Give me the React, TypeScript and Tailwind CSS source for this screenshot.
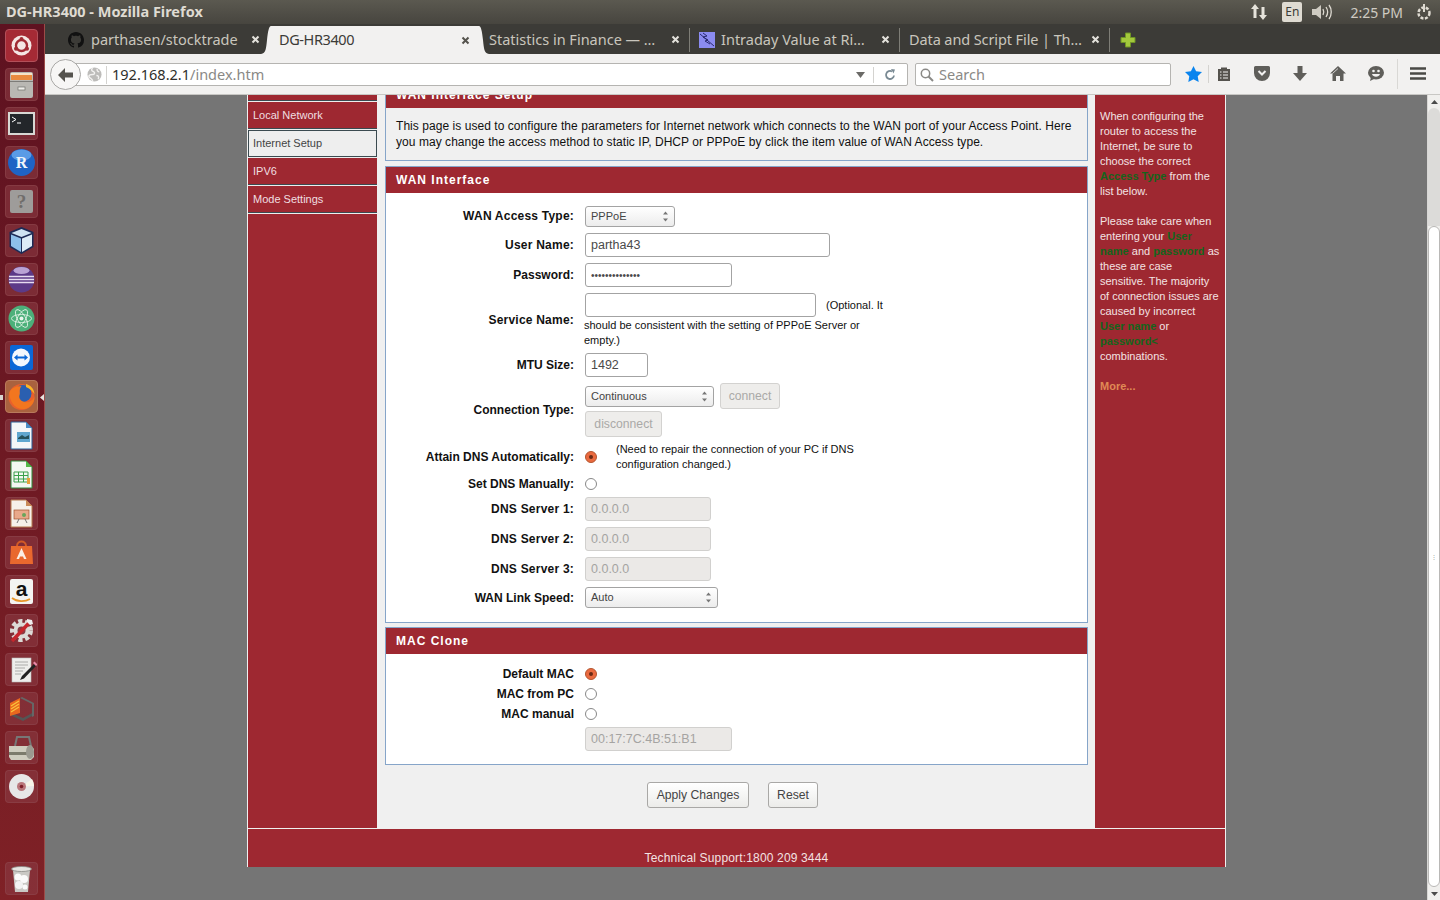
import type { ReactNode } from "react";

const sans = "font-['Liberation_Sans',Arial,sans-serif]";
const ui = "font-['Noto_Sans',sans-serif]";

function Tile({ children, active, dash }: { children: ReactNode; active?: boolean; dash?: boolean }) {
  const bg = active
    ? "bg-[#a9623f] border-[#b97a5c]"
    : dash
      ? "bg-[#a52a35] border-[#b3505a]"
      : "bg-[#8a3a42]/60 border-[#8f4a50]/50";
  return (
    <div className={`w-[33px] h-[33px] rounded-[4px] border shrink-0 flex items-center justify-center ${bg}`}>
      <svg width="31" height="31" viewBox="0 0 31 31">
        {children}
      </svg>
    </div>
  );
}

function Launcher() {
  return (
    <aside className="relative w-[45px] shrink-0 bg-gradient-to-b from-[#5e1220] to-[#7f2126] border-r border-[#9c4b48] flex flex-col items-center pt-[5px] pr-[6px] pl-[5px] gap-[6px]">
      <div className="absolute left-0 top-[371px] w-[3px] h-[5px] bg-[#d8d4d0]" />
      <svg width="4" height="7" viewBox="0 0 4 7" className="absolute left-[40px] top-[370px]"><path d="M4 0L0 3.500 4 7z" fill="#e8e4e0" /></svg>
      <Tile dash>
        <circle cx="15.5" cy="15.5" r="10" fill="#f4e6e4" />
        <circle cx="15.5" cy="15.5" r="5.5" fill="none" stroke="#a12b34" strokeWidth="2.4" />
        <circle cx="15.5" cy="9" r="2" fill="#a12b34" />
        <circle cx="10" cy="18.8" r="2" fill="#a12b34" />
        <circle cx="21" cy="18.8" r="2" fill="#a12b34" />
      </Tile>
      <Tile>
        <rect x="4" y="3" width="23" height="26" rx="2" fill="#b9b8b3" />
        <rect x="5" y="4" width="21" height="7" fill="#e98a3f" />
        <rect x="5" y="4" width="21" height="2" fill="#f6e2c8" />
        <rect x="4" y="12" width="23" height="1" fill="#7d7c78" />
        <rect x="12" y="18" width="7" height="3" fill="#eeeeea" stroke="#6f6f6b" strokeWidth="0.7" />
      </Tile>
      <Tile>
        <rect x="2" y="4" width="27" height="23" fill="#d8d8d4" />
        <rect x="4" y="6" width="23" height="19" fill="#23262a" />
        <path d="M6 9l4 2.500-4 2.500" fill="none" stroke="#fff" strokeWidth="1" />
        <path d="M11 15h4" stroke="#fff" strokeWidth="1" />
      </Tile>
      <Tile>
        <circle cx="15.5" cy="15.5" r="13.500" fill="#1f63c4" />
        <ellipse cx="15.5" cy="8" rx="10" ry="5.500" fill="#5a9be6" />
        <text x="15.5" y="21" textAnchor="middle" fontFamily="Liberation Serif, serif" fontWeight="700" fontSize="16" fill="#f2f5fa">R</text>
      </Tile>
      <Tile>
        <rect x="4" y="4" width="23" height="23" rx="2" fill="#9e9c9a" />
        <text x="15.5" y="22" textAnchor="middle" fontFamily="Liberation Serif, serif" fontWeight="700" fontSize="19" fill="#6f6d6b">?</text>
      </Tile>
      <Tile>
        <path d="M15.5 2l12 5v15l-12 7-12-7V7z" fill="#1d2a55" />
        <path d="M15.5 4l10 4-10 4-10-4z" fill="#cfe3f2" />
        <path d="M5 9.500l10 4V27l-10-6z" fill="#8ec0ea" />
        <path d="M16 13.500l10-4V21l-10 6z" fill="#dcebf6" />
      </Tile>
      <Tile>
        <circle cx="15.5" cy="15.5" r="13" fill="#5c3a88" />
        <path d="M3 12.5h25M3 15.5h25M3 18.5h25" stroke="#e6dcf0" strokeWidth="1.4" />
        <ellipse cx="15.5" cy="6.5" rx="8" ry="3.5" fill="#b9a2d4" />
      </Tile>
      <Tile>
        <circle cx="15.5" cy="15.5" r="13" fill="#4cb07a" />
        <circle cx="15.5" cy="15.5" r="2" fill="#e8f5ec" />
        <ellipse cx="15.5" cy="15.5" rx="10" ry="4" fill="none" stroke="#e8f5ec" strokeWidth="0.8" />
        <ellipse cx="15.5" cy="15.5" rx="10" ry="4" fill="none" stroke="#e8f5ec" strokeWidth="0.8" transform="rotate(60 15.5 15.5)" />
        <ellipse cx="15.5" cy="15.5" rx="10" ry="4" fill="none" stroke="#e8f5ec" strokeWidth="0.8" transform="rotate(120 15.5 15.5)" />
      </Tile>
      <Tile>
        <rect x="4" y="3" width="23" height="25" rx="2" fill="#0b67d6" />
        <circle cx="15" cy="15.5" r="9" fill="#f4f8fd" />
        <path d="M8 15.5l3.5-3v2h7v-2l3.5 3-3.5 3v-2h-7v2z" fill="#0b67d6" />
      </Tile>
      <Tile active>
        <circle cx="15.5" cy="16" r="13" fill="#e8602c" />
        <circle cx="17" cy="12.500" r="8.500" fill="#2a5fb0" />
        <path d="M3.500 12c0 9 6 17 15 16 6-1 10-6 10-12-2 4-6 6-10 5-4-1-6-4-5-7 1-2-1-5 2-9C9 5 4 8 3.500 12z" fill="#f2761f" />
        <path d="M20 3c4 1 8 4 8.500 10-2-3-4-5-8.500-7z" fill="#fbb627" />
      </Tile>
      <Tile>
        <path d="M5 2h15l6 6v21H5z" fill="#f4f6f8" stroke="#2a5f96" strokeWidth="1" />
        <path d="M20 2l6 6h-6z" fill="#4b8cc4" />
        <rect x="11" y="12" width="13" height="10" fill="#5fa6cf" />
        <path d="M12 18l4-3 3 2 4-2v4H12z" fill="#24515c" />
      </Tile>
      <Tile>
        <path d="M5 2h15l6 6v21H5z" fill="#f4f8f2" stroke="#2e8b3a" strokeWidth="1" />
        <path d="M20 2l6 6h-6z" fill="#54b948" />
        <path d="M8 13h14v10H8zM8 16.500h14M8 20h14M12.500 13v10M17.500 13v10" fill="none" stroke="#3aa04a" strokeWidth="1" />
        <rect x="21" y="19" width="3" height="6" fill="#e8a23a" />
      </Tile>
      <Tile>
        <path d="M5 2h15l6 6v21H5z" fill="#f6f1ea" stroke="#b47b4f" strokeWidth="1" />
        <path d="M20 2l6 6h-6z" fill="#c98a58" />
        <rect x="8" y="12" width="15" height="9" fill="#e9a98a" stroke="#a0522d" strokeWidth="0.7" />
        <circle cx="18" cy="17" r="2" fill="#6aa55a" />
        <path d="M13 21l-2 4M19 21l2 4" stroke="#555" strokeWidth="0.8" />
      </Tile>
      <Tile>
        <path d="M5 9h21l1 18H4z" fill="#e9682e" />
        <path d="M11 9c0-6 9-6 9 0" fill="none" stroke="#d25a26" strokeWidth="2" />
        <path d="M15.500 11l5 11h-2.500l-1-2.500h-3l-1 2.500h-2.500z" fill="#fbeee4" />
      </Tile>
      <Tile>
        <rect x="4" y="3" width="23" height="25" rx="2" fill="#f4f4f2" />
        <text x="15.500" y="20" textAnchor="middle" fontFamily="Liberation Sans, sans-serif" fontWeight="700" fontSize="21" fill="#111">a</text>
        <path d="M6 22c5 4 13 4 18 1" fill="none" stroke="#e8962a" strokeWidth="1.800" />
      </Tile>
      <Tile>
        <circle cx="15.500" cy="15.500" r="9" fill="none" stroke="#dcdad6" strokeWidth="5" strokeDasharray="4 2.500" />
        <circle cx="15.500" cy="15.500" r="8" fill="#dcdad6" />
        <circle cx="15.500" cy="15.500" r="4" fill="#8a3a42" />
        <path d="M6 26L23 8" stroke="#c5262c" strokeWidth="3.500" />
        <path d="M21 4l5 1 1 4-3 1-3-3z" fill="#eeeeee" />
      </Tile>
      <Tile>
        <rect x="6" y="4" width="19" height="24" fill="#eeeeec" stroke="#bbb" strokeWidth="0.6" />
        <path d="M9 8h13M9 11h13M9 14h10M9 17h8M9 20h6" stroke="#9a9a9a" strokeWidth="0.8" />
        <path d="M28 10l-12 12-2 4 4-1.500L30 12z" fill="#222" />
        <path d="M27 9l3 3 1.500-1.500-3-3z" fill="#e88aa8" />
      </Tile>
      <Tile>
        <path d="M4 22L17 28l11-6v-3L17 25 4 19z" fill="#555" />
        <path d="M16 4l12 6v13l-2 1V11L14 5z" fill="#666" />
        <path d="M4 10l10-5v15l-10 3z" fill="#e9671e" />
        <path d="M5 13l8-5M5 16l8-5M5 19l8-5" stroke="#f9c23c" strokeWidth="1.400" />
      </Tile>
      <Tile>
        <path d="M9 14l2-9h12l2 9" fill="none" stroke="#777" strokeWidth="2" />
        <path d="M3 14h22l3 3v8l-3 3H5l-2-3z" fill="#cfcdbf" />
        <rect x="3" y="20" width="22" height="3" fill="#7c7b6c" />
        <ellipse cx="24" cy="20" rx="4" ry="7" fill="#9b9a90" />
      </Tile>
      <Tile>
        <circle cx="15.500" cy="15.500" r="12.500" fill="#e7e7e7" />
        <path d="M15.500 15.500L26 8a12.500 12.500 0 0 1 2 7z" fill="#f6f4e8" />
        <circle cx="15.500" cy="15.500" r="4.500" fill="#b9777b" />
        <circle cx="15.500" cy="15.500" r="1.800" fill="#7e1f28" />
      </Tile>
      <div className="mt-auto mb-[5px]">
        <Tile>
          <path d="M7 7l2 22h13l2-22z" fill="#c9c8c4" />
          <ellipse cx="15.500" cy="6" rx="10" ry="2.500" fill="#e6e5e1" stroke="#8a8a86" strokeWidth="0.8" />
          <circle cx="12" cy="14" r="3.500" fill="#fafafa" />
          <circle cx="18" cy="16" r="4" fill="#fafafa" />
          <circle cx="13" cy="22" r="4" fill="#f2f2f2" />
          <circle cx="19" cy="24" r="2.500" fill="#fafafa" />
        </Tile>
      </div>
    </aside>
  );
}

function CloseX() {
  return (
    <svg width="9" height="9" viewBox="0 0 9 9" className="shrink-0">
      <path d="M1.500 1.500l6 6M7.500 1.500l-6 6" stroke="currentColor" strokeWidth="2" />
    </svg>
  );
}

function Sep() {
  return <div className="w-px h-[24px] bg-[#7e7d76] shrink-0" />;
}

function TabBar() {
  return (
    <div className={`h-[30px] bg-[#3c3b37] flex items-start pt-[2px] text-[#c9c6bd] text-[14.500px] ${ui}`}>
      <div className="w-[217px] h-[27px] flex items-center shrink-0 pl-[23px]">
        <svg width="16" height="16" viewBox="0 0 16 16" fill="#111" className="shrink-0">
          <path d="M8 0C3.580 0 0 3.580 0 8c0 3.540 2.290 6.530 5.470 7.590.4.070.55-.17.55-.38 0-.19-.01-.82-.01-1.490-2.010.37-2.530-.49-2.690-.94-.09-.23-.48-.94-.82-1.130-.28-.15-.68-.52-.01-.53.63-.01 1.080.58 1.230.82.720 1.210 1.870.870 2.330.660.070-.520.280-.870.510-1.070-1.780-.2-3.640-.890-3.640-3.950 0-.870.310-1.590.820-2.150-.080-.2-.360-1.020.080-2.120 0 0 .670-.210 2.200.820.640-.180 1.320-.270 2-.270s1.360.090 2 .270c1.530-1.040 2.200-.820 2.200-.820.440 1.100.160 1.920.080 2.120.510.560.820 1.270.820 2.150 0 3.070-1.870 3.750-3.650 3.950.290.250.540.730.540 1.480 0 1.070-.010 1.930-.010 2.200 0 .210.150.460.550.380A8.010 8.010 0 0 0 16 8c0-4.420-3.580-8-8-8z" />
        </svg>
        <span className="ml-[7px] w-[148px] truncate whitespace-nowrap">parthasen/stocktrade</span>
        <span className="ml-[12px] text-[#e4e2dc]"><CloseX /></span>
      </div>
      <div className="flex h-[28px] shrink-0 -ml-[1px]">
        <svg width="10" height="28" viewBox="0 0 10 28" className="shrink-0"><path d="M0 28c5-1 5-5 6-14C7 5 8 0 10 0v28z" fill="#f2f1f0" /></svg>
        <div className="w-[208px] bg-[#f2f1f0] text-[#3c3b37] flex items-center pl-[8px]">
          <span className="w-[182px] whitespace-nowrap tracking-[-0.4px]">DG-HR3400</span>
          <span className="text-[#55534d]"><CloseX /></span>
        </div>
        <svg width="10" height="28" viewBox="0 0 10 28" className="shrink-0"><path d="M10 28c-5-1-5-5-6-14C3 5 2 0 0 0v28z" fill="#f2f1f0" /></svg>
      </div>
      <div className="h-[27px] flex items-center shrink-0">
        <span className="w-[172px] ml-[-3px] pl-[3px] whitespace-nowrap overflow-hidden">Statistics in Finance — …</span>
        <span className="ml-[13px] text-[#e4e2dc]"><CloseX /></span>
        <span className="ml-[9px]"><Sep /></span>
        <svg width="16" height="16" viewBox="0 0 16 16" className="ml-[9px] shrink-0">
          <rect width="16" height="16" fill="#8b8bf0" />
          <path d="M1 2l14 12M4 1l4 3-4 1 5 3-3 1 5 3" fill="none" stroke="#2a2a70" strokeWidth="1" />
        </svg>
        <span className="ml-[6px] w-[146px] whitespace-nowrap overflow-hidden">Intraday Value at Ri…</span>
        <span className="ml-[14px] text-[#e4e2dc]"><CloseX /></span>
        <span className="ml-[9px]"><Sep /></span>
        <span className="ml-[9px] w-[174px] whitespace-nowrap tracking-[-0.1px]">Data and Script File | Th…</span>
        <span className="ml-[8px] text-[#e4e2dc]"><CloseX /></span>
        <span className="ml-[9px]"><Sep /></span>
        <svg width="16" height="16" viewBox="0 0 16 16" className="ml-[10px] shrink-0">
          <path d="M5.500 1h5v4.500H15v5h-4.500V15h-5v-4.500H1v-5h4.500z" fill="#a3c83c" stroke="#6f9425" strokeWidth="1" />
        </svg>
      </div>
    </div>
  );
}

function NavBar() {
  return (
    <div className={`h-[41px] bg-[#f2f1f0] border-b border-[#c8c7c4] flex items-center pl-[5px] pt-[1px] ${ui}`}>
      <button className="relative z-10 w-[31px] h-[31px] rounded-full border border-[#a9a8a6] bg-[#f7f6f5] flex items-center justify-center shrink-0">
        <svg width="16" height="14" viewBox="0 0 16 14"><path d="M7 0L0 7l7 7V9.500h8v-5H7z" fill="#55534e" /></svg>
      </button>
      <div className="-ml-[6px] w-[833px] h-[23px] bg-white border border-[#b5b4b1] rounded-r-[2px] flex items-center pl-[11px] pr-[11px] shrink-0">
        <svg width="15" height="15" viewBox="0 0 16 16" className="shrink-0">
          <circle cx="8" cy="8" r="7.500" fill="#bdbcba" />
          <path d="M6 1c-2 2-1 3 1 4s1 3-1 3-4 0-4 2 4 2 4 5M11 2c-1 2 1 3 2 3M10 9c2 0 3 1 2 4" stroke="#f2f1f0" strokeWidth="1.500" fill="none" />
        </svg>
        <div className="w-px h-[18px] bg-[#d4d3d0] ml-[4px] mr-[5px]" />
        <span className="text-[14.500px] text-[#2f2e2b] whitespace-nowrap">192.168.2.1<span className="text-[#8a8986]">/index.htm</span></span>
        <svg width="9" height="6" viewBox="0 0 9 6" className="ml-auto mr-[8px]"><path d="M0 0h9L4.500 6z" fill="#6b6a67" /></svg>
        <div className="w-px h-[16px] bg-[#d4d3d0] mr-[10px]" />
        <svg width="12" height="12" viewBox="0 0 12 12"><path d="M10 6.500A4 4 0 1 1 8 2.500" fill="none" stroke="#7a8a94" strokeWidth="1.800" /><path d="M7 0l4 .500-1.500 4z" fill="#7a8a94" /></svg>
      </div>
      <div className="ml-[7px] w-[256px] h-[23px] bg-white border border-[#b5b4b1] rounded-[2px] flex items-center pl-[4px] shrink-0">
        <svg width="14" height="14" viewBox="0 0 14 14"><circle cx="5.500" cy="5.500" r="4.200" fill="none" stroke="#8a8986" strokeWidth="1.500" /><path d="M8.500 8.500l4.500 4.500" stroke="#8a8986" strokeWidth="2" /></svg>
        <span className="ml-[5px] text-[14.500px] text-[#8a8986]">Search</span>
      </div>
      <div className="flex items-center ml-[3px] -mt-[2px]">
        <div className="w-[38px] flex justify-center">
          <svg width="17" height="16" viewBox="0 0 17 16"><path d="M8.500 0l2.600 5.300 5.900.800-4.300 4.100 1 5.800-5.200-2.800-5.200 2.800 1-5.800L0 6.100l5.900-.800z" fill="#0a84ee" /></svg>
        </div>
        <div className="w-px h-[18px] bg-[#d4d3d0] -ml-[4px]" />
        <div className="w-[29px] flex justify-center">
          <svg width="14" height="15" viewBox="0 0 14 15"><path d="M1 3h3V1.500h6V3h3v12H1z" fill="#55534e" /><path d="M3 6h1.500M3 9h1.500M3 12h1.500M6 6h5M6 9h5M6 12h5" stroke="#f2f1f0" strokeWidth="1.200" /></svg>
        </div>
        <div className="w-[47px] flex justify-center">
          <svg width="16" height="15" viewBox="0 0 16 15"><path d="M1.500 0h13A1.500 1.500 0 0 1 16 1.500V7a8 8 0 0 1-16 0V1.500A1.500 1.500 0 0 1 1.500 0z" fill="#5f5e5a" /><path d="M4.500 5L8 8.500 11.500 5" fill="none" stroke="#f2f1f0" strokeWidth="2" /></svg>
        </div>
        <div className="w-[29px] flex justify-center">
          <svg width="14" height="15" viewBox="0 0 14 15"><path d="M4.500 0h5v7H14l-7 8-7-8h4.500z" fill="#5f5e5a" /></svg>
        </div>
        <div className="w-[47px] flex justify-center">
          <svg width="16" height="15" viewBox="0 0 16 15"><path d="M8 0l8 7.500h-2.500V15h-3.500v-5H6v5H2.500V7.500H0z" fill="#5f5e5a" /><path d="M8 2.500L2.500 7.500" stroke="#f2f1f0" strokeWidth="0.800" /></svg>
        </div>
        <div className="w-[29px] flex justify-center">
          <svg width="16" height="15" viewBox="0 0 16 15"><ellipse cx="8" cy="6.800" rx="8" ry="6.800" fill="#5f5e5a" /><path d="M3 11l-1 4 4-2z" fill="#5f5e5a" /><circle cx="5.500" cy="5" r="1.300" fill="#f2f1f0" /><circle cx="10.500" cy="5" r="1.300" fill="#f2f1f0" /><path d="M4 8h8c-1 3.500-7 3.500-8 0z" fill="#f2f1f0" /></svg>
        </div>
        <div className="w-px h-[30px] bg-[#d9d8d5] ml-[7px]" />
        <div className="ml-[12px]">
          <svg width="16" height="13" viewBox="0 0 16 13"><path d="M0 1.500h16M0 6.500h16M0 11.500h16" stroke="#4a4945" strokeWidth="2.400" /></svg>
        </div>
      </div>
    </div>
  );
}

function Select({ value, width }: { value: string; width: string }) {
  return (
    <div className={`${width} h-[21px] border border-[#a3a3a3] rounded-[3px] bg-gradient-to-b from-white to-[#ececec] flex items-center justify-between pl-[5px] pr-[5px] text-[11px] text-[#444]`}>
      <span>{value}</span>
      <svg width="7" height="11" viewBox="0 0 7 11"><path d="M1 3.500L3.500 0.500 6 3.500zM1 7.500h5L3.500 10.500z" fill="#777" /></svg>
    </div>
  );
}

function TextBox({ value, width, type = "text", disabled }: { value: string; width: string; type?: string; disabled?: boolean }) {
  return (
    <input
      readOnly
      type={type}
      value={value}
      className={`${width} h-[24px] border rounded-[3px] px-[5px] outline-none ${type === "password" ? "text-[10px]" : "text-[12.500px]"} ${
        disabled ? "bg-[#ebe9e7] border-[#d1d0ce] text-[#a5a4a2]" : "bg-white border-[#a3a3a3] text-[#4a4a4a]"
      }`}
    />
  );
}

function Radio({ on }: { on?: boolean }) {
  if (on) {
    return (
      <div className="w-[12px] h-[12px] rounded-full bg-[#ea6a3f] border border-[#b4552f] flex items-center justify-center shrink-0">
        <div className="w-[4px] h-[4px] rounded-full bg-[#6a2a15]" />
      </div>
    );
  }
  return <div className="w-[12px] h-[12px] rounded-full bg-white border border-[#888] shrink-0" />;
}

function Row({ label, height, wide, children }: { label: string; height: string; wide?: boolean; children?: ReactNode }) {
  return (
    <div className={`flex items-center ${height}`}>
      <label className={`w-[188px] text-right font-bold text-[12px] text-[#111] shrink-0 ${wide ? "tracking-[0.22px]" : ""}`}>{label}</label>
      <div className="ml-[11px] flex-1 min-w-0">{children}</div>
    </div>
  );
}

function CardHeader({ title }: { title: string }) {
  return (
    <div className="h-[26px] bg-[#9e2831] flex items-center pl-[10px] text-white text-[12px] font-bold tracking-[1px]">{title}</div>
  );
}

function GreyButton({ children, disabled, className }: { children: ReactNode; disabled?: boolean; className?: string }) {
  return (
    <button
      className={`h-[26px] rounded-[3px] border text-[12.200px] ${
        disabled
          ? "border-[#d3d2d0] bg-[#eeedeb] text-[#aaa9a7]"
          : "border-[#a9a8a6] bg-gradient-to-b from-white to-[#ececea] text-[#444]"
      } ${className ?? ""}`}
    >
      {children}
    </button>
  );
}

function SideMenu() {
  const items = ["Local Network", "Internet Setup", "IPV6", "Mode Settings"];
  return (
    <nav className="w-[129px] shrink-0 bg-[#9e2831] pt-[5px]">
      <div className="h-px bg-[#3b4a50] shadow-[0_1px_0_#eee] mb-px" />
      {items.map((item) => (
        <div
          key={item}
          className={`h-[27px] mb-px flex items-center text-[11px] shadow-[0_1px_0_#eee] border-b border-[#3b4a50] ${
            item === "Internet Setup" ? "pl-[4px] bg-[#eeeeee] text-[#444] border border-[#3b4a50]" : "pl-[5px] text-[#f0dfe0]"
          }`}
        >
          {item}
        </div>
      ))}
    </nav>
  );
}

function MainColumn() {
  return (
    <main className="w-[718px] shrink-0 bg-[#f0f0f0] pl-[8px] pr-[7px] text-[12px] text-[#111] overflow-hidden">
      <section className="-mt-[14px] border border-[#86a5c9]">
        <CardHeader title="WAN Interface Setup" />
        <p className="px-[10px] pt-[10px] leading-[16px] h-[52px] tracking-[0.05px]">
          This page is used to configure the parameters for Internet network which connects to the WAN port of your Access Point. Here you may change the access method to static IP, DHCP or PPPoE by click the item value of WAN Access type.
        </p>
      </section>

      <section className="mt-[5px] border border-[#86a5c9] bg-white h-[457px]">
        <CardHeader title="WAN Interface" />
        <div className="pt-[9px]">
          <Row wide label="WAN Access Type:" height="h-[28px]"><Select value="PPPoE" width="w-[90px]" /></Row>
          <Row wide label="User Name:" height="h-[30px]"><TextBox value="partha43" width="w-[245px]" /></Row>
          <Row label="Password:" height="h-[30px]"><TextBox type="password" value="partha43secret" width="w-[147px]" /></Row>
          <Row wide label="Service Name:" height="h-[60px]">
            <div className="w-[300px] text-[11px] leading-[15px]">
              <div className="flex items-center">
                <TextBox value="" width="w-[231px]" />
                <span className="ml-[10px] whitespace-nowrap mt-[1px]">(Optional. It</span>
              </div>
              <div className="-ml-px mt-[1px]">should be consistent with the setting of PPPoE Server or empty.)</div>
            </div>
          </Row>
          <Row label="MTU Size:" height="h-[30px]"><TextBox value="1492" width="w-[63px]" /></Row>
          <Row label="Connection Type:" height="h-[60px]">
            <div className="flex items-center gap-[6px]">
              <Select value="Continuous" width="w-[129px]" />
              <GreyButton disabled className="w-[60px]">connect</GreyButton>
            </div>
            <GreyButton disabled className="w-[77px] mt-[2px]">disconnect</GreyButton>
          </Row>
          <Row label="Attain DNS Automatically:" height="h-[34px]">
            <div className="flex items-center">
              <Radio on />
              <p className="ml-[19px] w-[260px] text-[11px] leading-[15px]">(Need to repair the connection of your PC if DNS configuration changed.)</p>
            </div>
          </Row>
          <Row label="Set DNS Manually:" height="h-[20px]"><Radio /></Row>
          <Row wide label="DNS Server 1:" height="h-[29px]"><TextBox disabled value="0.0.0.0" width="w-[126px]" /></Row>
          <Row wide label="DNS Server 2:" height="h-[32px]"><TextBox disabled value="0.0.0.0" width="w-[126px]" /></Row>
          <Row wide label="DNS Server 3:" height="h-[28px]"><TextBox disabled value="0.0.0.0" width="w-[126px]" /></Row>
          <Row label="WAN Link Speed:" height="h-[29px]"><Select value="Auto" width="w-[133px]" /></Row>
        </div>
      </section>

      <section className="mt-[4px] border border-[#86a5c9] bg-white h-[138px]">
        <CardHeader title="MAC Clone" />
        <div className="pt-[10px]">
          <Row label="Default MAC" height="h-[20px]"><Radio on /></Row>
          <Row label="MAC from PC" height="h-[20px]"><Radio /></Row>
          <Row label="MAC manual" height="h-[20px]"><Radio /></Row>
          <Row label="" height="h-[30px]"><TextBox disabled value="00:17:7C:4B:51:B1" width="w-[147px]" /></Row>
        </div>
      </section>

      <div className="flex justify-center gap-[19px] pt-[17px] pr-[8px]">
        <GreyButton className="w-[102px]">Apply Changes</GreyButton>
        <GreyButton className="w-[50px]">Reset</GreyButton>
      </div>
    </main>
  );
}

function HelpPanel() {
  const green = "font-bold text-[#14641c]";
  return (
    <aside className="flex-1 bg-[#9e2831] pl-[5px] pr-[4px] pt-[14px] text-[11px] leading-[15px] text-[#f3e3e3]">
      <p>
        When configuring the router to access the Internet, be sure to choose the correct <span className={green}>Access Type</span> from the list below.
      </p>
      <p className="mt-[15px]">
        Please take care when entering your <span className={green}>User name</span> and <span className={green}>password</span> as these are case sensitive. The majority of connection issues are caused by incorrect <span className={green}>User name</span> or <span className={green}>password&lt;</span> combinations.
      </p>
      <p className="mt-[15px] font-bold text-[#e08a55]">More...</p>
    </aside>
  );
}

function Scrollbar() {
  return (
    <div className="w-[13px] shrink-0 bg-[#f0efed] border-l border-[#d8d7d5] flex flex-col items-center">
      <div className="h-[13px] w-full flex items-center justify-center">
        <svg width="7" height="4" viewBox="0 0 7 4"><path d="M0 4l3.500-4L7 4z" fill="#4a4a4a" /></svg>
      </div>
      <div className="h-[118px] w-full bg-[#dcdbd9] rounded-t-[6px]" />
      <div className="flex-1 w-full bg-white border border-[#b9b8b6] rounded-t-[6px] rounded-b-[6px] flex items-center justify-center">
        <span className="text-[6px] text-[#999] leading-none">⋮</span>
      </div>
      <div className="h-[13px] w-full flex items-center justify-center">
        <svg width="7" height="4" viewBox="0 0 7 4"><path d="M0 0l3.500 4L7 0z" fill="#4a4a4a" /></svg>
      </div>
    </div>
  );
}

export default function App() {
  return (
    <div className={`w-[1440px] h-[900px] overflow-hidden flex flex-col ${sans}`}>
      <header className={`h-[24px] shrink-0 bg-gradient-to-b from-[#5b5950] to-[#47453f] flex items-center justify-between pl-[6px] ${ui}`}>
        <span className="text-[14.500px] font-bold text-[#dfdbd2]">DG-HR3400 - Mozilla Firefox</span>
        <div className="flex items-center text-[#dfdbd2]">
          <svg width="18" height="18" viewBox="0 0 18 18">
            <path d="M5 1l4 5H6.500v9h-3V6H1z" fill="#e6e3db" />
            <path d="M13 17l-4-5h2.500V4h3v8H17z" fill="#e6e3db" />
          </svg>
          <div className="ml-[14px] w-[20px] h-[20px] rounded-[2px] bg-[#dfdbd2] text-[#3c3b37] text-[12px] flex items-center justify-center">En</div>
          <svg width="20" height="16" viewBox="0 0 20 16" className="ml-[10px]">
            <path d="M0 5h4l5-4v14l-5-4H0z" fill="#cfcbc2" />
            <path d="M11 5c1 2 1 4 0 6M14 3c2 3 2 7 0 10M17 1c3 4 3 10 0 14" fill="none" stroke="#dfdbd2" strokeWidth="1.300" />
          </svg>
          <span className="ml-[18px] text-[14px] text-[#cfcbc2]">2:25 PM</span>
          <svg width="18" height="18" viewBox="0 0 18 18" className="ml-[12px] mr-[7px]">
            <circle cx="9" cy="10" r="5.500" fill="none" stroke="#dfdbd2" strokeWidth="2.500" strokeDasharray="3 1.500" />
            <path d="M9 1v8" stroke="#dfdbd2" strokeWidth="2" />
          </svg>
        </div>
      </header>
      <div className="flex flex-1 min-h-0">
        <Launcher />
        <div className="flex-1 flex flex-col min-w-0">
          <TabBar />
          <NavBar />
          <div className="flex-1 flex min-h-0 bg-[#757575]">
            <div className="flex-1 min-w-0">
              <div className="ml-[202px] w-[979px] border-x border-x-[#f0f0f0] bg-[#9e2831]">
                <div className="flex h-[734px] overflow-hidden border-b border-[#f0f0f0]">
                  <SideMenu />
                  <MainColumn />
                  <HelpPanel />
                </div>
                <div className="h-[38px] flex items-end justify-center text-[12px] tracking-[0.16px] text-[#f3e3e3]">Technical Support:1800 209 3444</div>
              </div>
            </div>
            <Scrollbar />
          </div>
        </div>
      </div>
    </div>
  );
}
